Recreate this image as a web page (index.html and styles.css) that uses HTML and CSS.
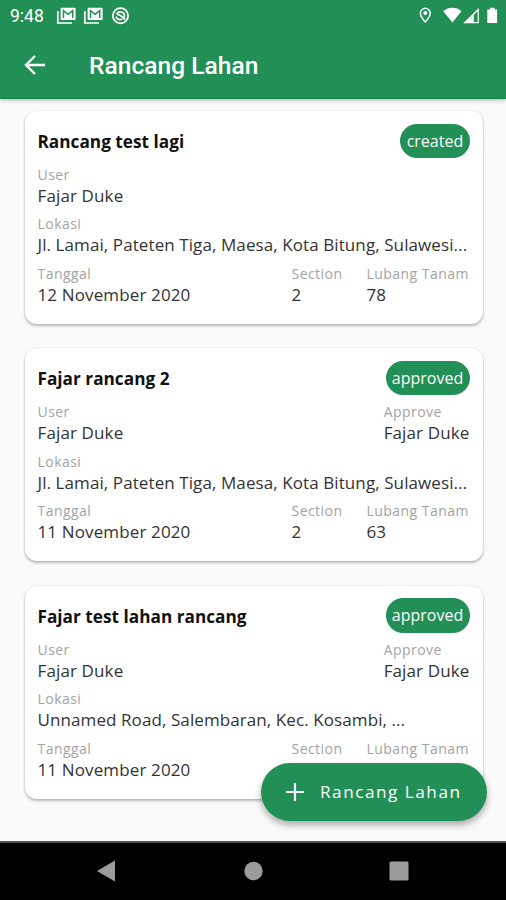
FILE: index.html
```html
<!DOCTYPE html>
<html lang="id">
<head>
<meta charset="utf-8">
<title>Rancang Lahan</title>
<link rel="stylesheet" href="styles.css">
</head>
<body>
<div class="screen">
  <header class="header">
    <div class="status">
      <span class="clock">9:48</span>
      <svg class="status-left" width="76" height="20" viewBox="0 0 76 20" fill="none" stroke="#fff">
        <g id="mail">
          <path d="M1.8 5v12H16" stroke-width="1.7"/>
          <rect x="4.6" y="1.8" width="15" height="12.2" rx="1" fill="#fff" stroke="none"/>
          <path d="M7.500 12V4.600l4.600 3.800 4.600-3.800V12" stroke="#228f56" stroke-width="1.500"/>
        </g>
        <use href="#mail" x="27"/>
        <circle cx="64.5" cy="9.8" r="7.6" stroke-width="1.8"/>
        <path d="M60.700 8.400c1.300-3.400 7-3.200 7.700.4.200 1.200 0 2-.5 2.800M60 10.600c1 2.800 4 3.800 6.300 2.300M61.500 8.800c2.500-.8 4 1.500 7.700 4.700" stroke-width="1.700"/>
      </svg>
      <svg class="status-right" width="82" height="20" viewBox="0 0 82 20" fill="#fff">
        <path d="M8.300 2.300a4.900 4.900 0 0 0-4.900 4.900c0 3.400 4.900 8.700 4.900 8.700s4.900-5.300 4.900-8.700a4.900 4.900 0 0 0-4.900-4.900z" fill="none" stroke="#fff" stroke-width="1.500"/>
        <circle cx="8.300" cy="7.100" r="2"/>
        <path d="M26.300 5.300c5-4.600 13.200-4.600 18.200 0L35.400 16.600z"/>
        <path d="M61.800 1.900v15.400H46.200z"/>
        <path d="M60.400 5.600v10.200h-5.900v-4.300z" fill="#228f56"/>
        <path d="M56.800 8.800v7.500h-2.600v-5z"/>
        <path d="M57 9.200l3.400-3.600v10.200H57z" fill="#228f56"/>
        <path d="M73.100 1.800h4.500v1.600h2.500V17h-9.800V3.400h2.800z"/>
      </svg>
    </div>
    <div class="appbar">
      <svg class="back" width="22" height="20" viewBox="0 0 22 20" fill="none" stroke="#fff" stroke-width="2.400"><path d="M21 10H2.500M11 1L2 10l9 9"/></svg>
      <h1 class="title">Rancang Lahan</h1>
    </div>
  </header>

  <main class="list">
    <article class="card">
      <div class="card-head"><h2 class="name">Rancang test lagi</h2><span class="badge">created</span></div>
      <div class="row"><div><div class="label">User</div><div class="value">Fajar Duke</div></div></div>
      <div class="row"><div><div class="label">Lokasi</div><div class="value address">Jl. Lamai, Pateten Tiga, Maesa, Kota Bitung, Sulawesi...</div></div></div>
      <div class="row stats"><div><div class="label">Tanggal</div><div class="value">12 November 2020</div></div><div><div class="label">Section</div><div class="value">2</div></div><div><div class="label">Lubang Tanam</div><div class="value">78</div></div></div>
    </article>
    <article class="card">
      <div class="card-head"><h2 class="name">Fajar rancang 2</h2><span class="badge">approved</span></div>
      <div class="row"><div><div class="label">User</div><div class="value">Fajar Duke</div></div><div><div class="label">Approve</div><div class="value">Fajar Duke</div></div></div>
      <div class="row"><div><div class="label">Lokasi</div><div class="value address">Jl. Lamai, Pateten Tiga, Maesa, Kota Bitung, Sulawesi...</div></div></div>
      <div class="row stats"><div><div class="label">Tanggal</div><div class="value">11 November 2020</div></div><div><div class="label">Section</div><div class="value">2</div></div><div><div class="label">Lubang Tanam</div><div class="value">63</div></div></div>
    </article>
    <article class="card">
      <div class="card-head"><h2 class="name">Fajar test lahan rancang</h2><span class="badge">approved</span></div>
      <div class="row"><div><div class="label">User</div><div class="value">Fajar Duke</div></div><div><div class="label">Approve</div><div class="value">Fajar Duke</div></div></div>
      <div class="row"><div><div class="label">Lokasi</div><div class="value address">Unnamed Road, Salembaran, Kec. Kosambi, ...</div></div></div>
      <div class="row stats"><div><div class="label">Tanggal</div><div class="value">11 November 2020</div></div><div><div class="label">Section</div></div><div><div class="label">Lubang Tanam</div></div></div>
    </article>
    <button class="fab">
      <svg width="18" height="18" viewBox="0 0 18 18" stroke="#fff" stroke-width="2.200"><path d="M9 0v18M0 9h18"/></svg>
      <span>Rancang Lahan</span>
    </button>
  </main>

  <nav class="navbar">
    <svg width="20" height="22" viewBox="0 0 20 22"><path d="M1 11L19 .5v21z" fill="#9c9c9c"/></svg>
    <svg width="20" height="20" viewBox="0 0 20 20"><circle cx="10.500" cy="10" r="9.200" fill="#9c9c9c"/></svg>
    <svg width="20" height="20" viewBox="0 0 20 20"><rect x=".5" y=".5" width="19" height="19" rx="1.500" fill="#9c9c9c"/></svg>
  </nav>
</div>
</body>
</html>
```
FILE: styles.css
```css
* { box-sizing: border-box; }
body { margin: 0; background: #fafafa; font-family: "Open Sans", "Noto Sans", sans-serif; }
h1, h2 { margin: 0; }
svg { display: block; flex: none; }
.screen { width: 506px; height: 900px; display: flex; flex-direction: column; overflow: hidden; }
.header { height: 99px; flex: none; background: #228f56; color: #fff; border-bottom: 1px solid #148447; box-shadow: 0 1px 4px rgba(0,0,0,.3); position: relative; z-index: 1; }
.status { height: 31px; display: flex; align-items: center; padding: 0 7px 0 10px; }
.clock { font: 400 17.5px/31px Roboto, sans-serif; width: 46px; letter-spacing: 0; padding-top: 1px; }
.status-right { margin-left: auto; }
.appbar { height: 68px; display: flex; align-items: center; padding: 0 0 0 24px; }
.back { margin-right: 43px; margin-top: -1px; }
.title { font: 500 24.5px/30px Roboto, sans-serif; letter-spacing: .05px; padding-top: 1px; }
.list { flex: 1; min-height: 0; padding: 12px 23.5px 0 24.5px; display: flex; flex-direction: column; gap: 24.7px; position: relative; }
.card { height: 212.8px; flex: none; background: #fff; border-radius: 12px; padding: 12.5px 13px 0; box-shadow: 0 2px 3px rgba(0,0,0,.26), 0 0 2px rgba(0,0,0,.12); }
.card-head { height: 34.5px; display: flex; align-items: center; justify-content: space-between; margin-bottom: 7px; }
.name { font-size: 17.2px; line-height: 24px; font-weight: 700; color: #111; letter-spacing: .02px; padding-top: 2px; }
.badge { height: 34.5px; line-height: 34px; border-radius: 17.25px; background: #228f56; color: #fff; padding: 0 6.3px; font-size: 16px; }
.row { height: 49.3px; display: flex; justify-content: space-between; white-space: nowrap; }
.label { font-size: 14px; line-height: 19px; color: #a3a3a3; letter-spacing: .46px; }
.value { font-size: 17px; line-height: 24.4px; color: #333; letter-spacing: .13px; }
.address { letter-spacing: .09px; }
.stats { display: grid; grid-template-columns: 254px 75px auto; justify-content: start; }
.fab { position: absolute; right: 19px; bottom: 20px; width: 226px; height: 58px; border: 0; border-radius: 29px; background: #228f56; color: #fff; display: flex; align-items: center; padding: 0 0 0 25px; gap: 16px; box-shadow: 0 4px 7px rgba(0,0,0,.32); font: 400 17.2px/24px "Open Sans", sans-serif; letter-spacing: 1.5px; white-space: nowrap; }
.navbar { height: 59px; flex: none; background: #000; border-top: 2px solid #555; display: flex; justify-content: space-between; align-items: center; padding: 0 97px 2px 96px; }
```
